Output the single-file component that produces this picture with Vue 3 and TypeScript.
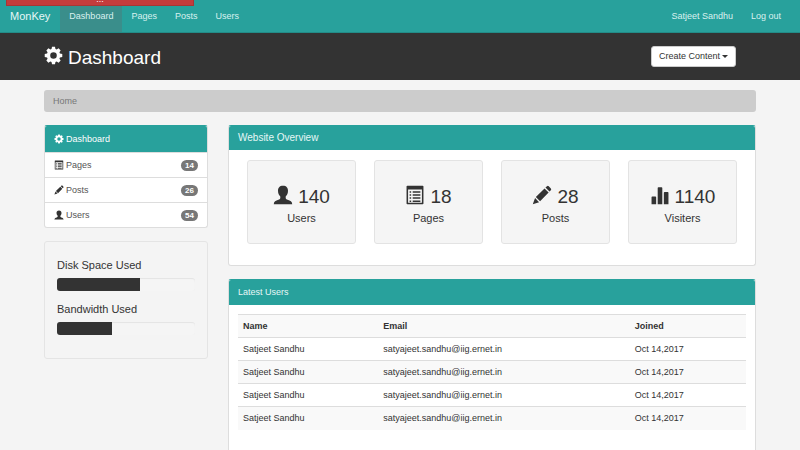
<script setup lang="ts">
type IconName = 'cog' | 'list' | 'pencil' | 'user' | 'stats'

const icons: Record<IconName, string> = {
  cog: 'M10 1h4l.7 3.100 1.600.7L19 3.100 21.800 6l-1.700 2.700.7 1.600 3.200.7v4l-3.200.7-.7 1.600 1.700 2.700-2.800 2.800-2.700-1.700-1.600.7L14 25h-4l-.7-3.200-1.600-.7L5 22.800 2.200 20l1.700-2.700-.7-1.600L0 15v-4l3.200-.7.7-1.600L2.200 6 5 3.100l2.700 1.700 1.600-.7zM12 8.500a4.500 4.500 0 1 0 0 9 4.500 4.500 0 0 0 0-9z',
  list: 'M2 1h20q1 0 1 1v22q0 1-1 1H2q-1 0-1-1V2q0-1 1-1zM3 6v17h18V6zM5 8h2v2H5zM9 8h10v2H9zM5 12h2v2H5zM9 12h10v2H9zM5 16h2v2H5zM9 16h10v2H9zM5 20h2v2H5zM9 20h10v2H9z',
  pencil: 'M18.500 1.500q1.200-1 2.300 0L23.500 4.500q1 1.200 0 2.300l-1.800 1.800L16.500 3.300zM15.300 4.500l5.300 5.300L9.500 21.200 4 15.700zM3 17L8.200 22.300 0 25z',
  user: 'M12 1c4.500 0 6.500 2.700 6.500 6.500 0 3.200-1 5.500-3 7.300v2c0 1.200 1 1.800 2.500 2.400 3.500 1.200 6 2.300 6 5.800H0c0-3.500 2.500-4.600 6-5.800 1.500-.6 2.500-1.200 2.500-2.400v-2c-2-1.800-3-4.100-3-7.300C5.500 3.700 7.500 1 12 1z',
  stats: 'M1 16q0-1 1-1h4q1 0 1 1v9H1zM9 4q0-1 1-1h4q1 0 1 1v21H9zM17 10q0-1 1-1h4q1 0 1 1v15h-6z',
}

const navLinks = ['Dashboard', 'Pages', 'Posts', 'Users']

const sections: { label: string; icon: IconName; count: number }[] = [
  { label: 'Pages', icon: 'list', count: 14 },
  { label: 'Posts', icon: 'pencil', count: 26 },
  { label: 'Users', icon: 'user', count: 54 },
]

const usage = [
  { label: 'Disk Space Used', percent: 60 },
  { label: 'Bandwidth Used', percent: 40 },
]

const stats: { label: string; icon: IconName; value: number }[] = [
  { label: 'Users', icon: 'user', value: 140 },
  { label: 'Pages', icon: 'list', value: 18 },
  { label: 'Posts', icon: 'pencil', value: 28 },
  { label: 'Visiters', icon: 'stats', value: 1140 },
]

const users = Array.from({ length: 4 }, (_, id) => ({
  id,
  name: 'Satjeet Sandhu',
  email: 'satyajeet.sandhu@iig.ernet.in',
  joined: 'Oct 14,2017',
}))
</script>

<template>
  <div class="page">
    <div class="notice"><span>...</span></div>
    <nav class="navbar">
      <a class="brand" href="#">MonKey</a>
      <a v-for="(link, i) in navLinks" :key="link" href="#" class="nav-link" :class="{ current: i === 0 }">{{ link }}</a>
      <a class="nav-link account" href="#">Satjeet Sandhu</a>
      <a class="nav-link" href="#">Log out</a>
    </nav>

    <header class="masthead">
      <div class="container masthead-row">
        <h1>
          <svg class="icon" viewBox="0 0 24 26" aria-hidden="true"><path :d="icons.cog" fill-rule="evenodd" /></svg>
          <span>Dashboard</span>
        </h1>
        <button type="button" class="create">Create Content <i class="caret"></i></button>
      </div>
    </header>

    <div class="container">
      <div class="breadcrumb">Home</div>
      <div class="columns">
        <aside>
          <div class="list">
            <a href="#" class="item active">
              <svg class="icon" viewBox="0 0 24 26" aria-hidden="true"><path :d="icons.cog" fill-rule="evenodd" /></svg>
              <span>Dashboard</span>
            </a>
            <a v-for="s in sections" :key="s.label" href="#" class="item">
              <svg class="icon" viewBox="0 0 24 26" aria-hidden="true"><path :d="icons[s.icon]" fill-rule="evenodd" /></svg>
              <span>{{ s.label }}</span>
              <span class="badge">{{ s.count }}</span>
            </a>
          </div>
          <div class="usage">
            <div v-for="u in usage" :key="u.label" class="usage-row">
              <h4>{{ u.label }}</h4>
              <div class="track" role="progressbar" :aria-label="u.label" :aria-valuenow="u.percent">
                <div class="fill" :style="{ width: u.percent + '%' }"></div>
              </div>
            </div>
          </div>
        </aside>

        <main>
          <section class="panel">
            <h3 class="panel-title large">Website Overview</h3>
            <div class="stats">
              <div v-for="s in stats" :key="s.label" class="stat">
                <h2>
                  <svg class="icon" viewBox="0 0 24 26" aria-hidden="true"><path :d="icons[s.icon]" fill-rule="evenodd" /></svg>
                  <span>{{ s.value }}</span>
                </h2>
                <h4>{{ s.label }}</h4>
              </div>
            </div>
          </section>

          <section class="panel">
            <h3 class="panel-title">Latest Users</h3>
            <div class="table-wrap">
              <table>
                <thead>
                  <tr><th class="name">Name</th><th class="email">Email</th><th>Joined</th></tr>
                </thead>
                <tbody>
                  <tr v-for="u in users" :key="u.id">
                    <td>{{ u.name }}</td>
                    <td>{{ u.email }}</td>
                    <td>{{ u.joined }}</td>
                  </tr>
                </tbody>
              </table>
            </div>
          </section>
        </main>
      </div>
    </div>
  </div>
</template>

<style>
body {
  background: #f4f4f4;
  overflow: hidden;
}
</style>

<style scoped>
* {
  box-sizing: border-box;
}
.page {
  position: relative;
  font: 9px/13px "Liberation Sans", Arial, sans-serif;
  color: #333;
}
a {
  color: inherit;
  text-decoration: none;
}
h1, h2, h3, h4 {
  margin: 0;
  font-weight: 400;
}
.icon {
  width: 1em;
  height: 1em;
  fill: currentColor;
  flex: none;
}
.notice {
  position: absolute;
  top: 0;
  left: 6px;
  width: 188px;
  height: 6px;
  background: #c43c3c;
  border: 1px solid #a93634;
  border-top: 0;
  color: #fff;
  display: flex;
  justify-content: center;
  align-items: flex-end;
  line-height: 11px;
}
.navbar {
  display: flex;
  align-items: stretch;
  height: 33px;
  padding-right: 10px;
  background: #28a19c;
  border-bottom: 1px solid #238c88;
  color: #d9f1ef;
  line-height: 32px;
}
.brand {
  padding: 0 10px;
  font-size: 11px;
  color: #e6f7f6;
}
.nav-link {
  padding: 0 9px;
}
.current {
  background: #3a8e8b;
}
.account {
  margin-left: auto;
}
.masthead {
  background: #333;
  color: #fff;
}
.container {
  margin: 0 44px;
}
.masthead-row {
  display: flex;
  justify-content: space-between;
  align-items: center;
  height: 47px;
  padding: 0 20px 1px 0;
}
h1 {
  display: flex;
  gap: 5px;
  font-size: 19px;
  line-height: 22px;
}
h1 .icon,
h2 .icon {
  margin-top: 2px;
}
h1 span,
h2 span {
  padding-top: 3px;
}
.create {
  display: flex;
  align-items: center;
  gap: 2px;
  height: 21px;
  padding: 0 7px;
  border: 1px solid #ccc;
  border-radius: 3px;
  background: #fff;
  color: #333;
  font: inherit;
}
.caret {
  border: 3px solid transparent;
  border-top-color: currentColor;
  border-bottom: 0;
}
.breadcrumb {
  margin: 10px 0 13px;
  padding: 0 9px;
  line-height: 22px;
  border-radius: 3px;
  background: #ccc;
  color: #777;
}
.columns {
  display: grid;
  grid-template-columns: minmax(0, 164fr) minmax(0, 528fr);
  gap: 20px;
}
.list {
  border: 1px solid #ddd;
  border-radius: 3px;
  background: #fff;
  overflow: hidden;
}
.item {
  display: flex;
  align-items: center;
  gap: 2px;
  height: 25px;
  padding: 0 9px;
  color: #555;
}
.item .icon {
  width: 10px;
  height: 10px;
  color: #333;
}
.item + .item {
  border-top: 1px solid #ddd;
}
.item.active,
.active .icon {
  color: #fff;
}
.item.active {
  height: 26px;
  background: #28a19c;
}
.list:has(.active) {
  border-top-color: #28a19c;
}
.badge {
  margin-left: auto;
  padding: 0 4px;
  border-radius: 6px;
  background: #777;
  color: #fff;
  font-size: 8px;
  font-weight: 700;
  line-height: 11px;
}
.usage {
  margin-top: 13px;
  padding: 16px 12px 10px;
  border: 1px solid #e4e4e4;
  border-radius: 3px;
}
h4 {
  font-size: 11px;
  line-height: 15px;
}
.track {
  height: 13px;
  margin: 5px 0 11px;
  border-radius: 3px;
  background: #f5f5f5;
  box-shadow: inset 0 1px 1px #e4e4e4;
  overflow: hidden;
}
.usage-row:last-child .track {
  margin-bottom: 13px;
}
.fill {
  height: 100%;
  background: #333;
}
.panel {
  margin-bottom: 13px;
  border: 1px solid #ddd;
  border-top-color: #28a19c;
  border-radius: 3px;
  background: #fff;
  overflow: hidden;
}
.panel-title {
  padding: 0 9px;
  background: #28a19c;
  color: #e6f7f6;
  font-size: 9px;
  line-height: 25px;
}
.large {
  font-size: 10px;
  line-height: 24px;
}
.stats {
  display: grid;
  grid-template-columns: repeat(4, 1fr);
  gap: 18px;
  padding: 10px 18px 21px;
}
.stat {
  height: 84px;
  padding-top: 22px;
  border: 1px solid #e3e3e3;
  border-radius: 3px;
  background: #f5f5f5;
  text-align: center;
}
.stat h2 {
  display: flex;
  justify-content: center;
  gap: 5px;
  font-size: 19px;
  line-height: 22px;
}
.stat .icon {
  width: 20px;
  height: 20px;
}
.stat h4 {
  margin-top: 3px;
}
.table-wrap {
  padding: 9px 9px 40px;
}
table {
  width: 100%;
  border-collapse: collapse;
  table-layout: fixed;
}
th, td {
  height: 23px;
  padding: 0 5px;
  border-top: 1px solid #ddd;
  text-align: left;
}
.name {
  width: 27.6%;
}
.email {
  width: 49.5%;
}
thead tr,
tbody tr:nth-child(even) {
  background: #f9f9f9;
}
</style>
